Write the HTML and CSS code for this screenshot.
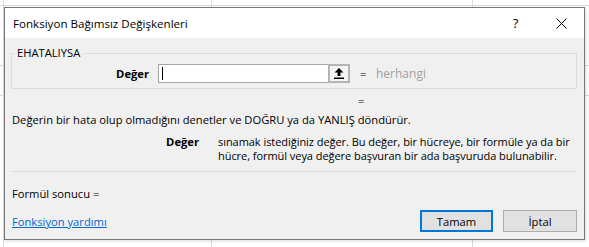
FILE: index.html
```html
<!DOCTYPE html>
<html lang="tr">
<head>
    <meta charset="utf-8">
    <title>Fonksiyon Bağımsız Değişkenleri</title>
    <link rel="stylesheet" href="styles.css">
</head>
<body>
    <div class="dialog">
        <div class="titlebar">
            <span class="title">Fonksiyon Bağımsız Değişkenleri</span>
            <span class="help">?</span>
            <span class="close">
                <svg width="11" height="11" viewBox="0 0 11 11"><path d="M0.5 0.5L10.5 10.5M10.5 0.5L0.5 10.5" stroke="#000" stroke-width="1" fill="none"/></svg>
            </span>
        </div>
        <div class="content">
            <fieldset class="group">
                <legend>EHATALIYSA</legend>
                <div class="argrow">
                    <span class="arglabel">Değer</span>
                    <div class="refbox">
                        <div class="refinput"><span class="caret"></span></div>
                        <span class="refbtn">
                            <svg width="10" height="11" viewBox="0 0 10 11"><path d="M5 0L9.5 4.5H6.5V8H3.5V4.5H0.5Z" fill="#000"/><rect x="0" y="9.5" width="10" height="1.5" fill="#000"/></svg>
                        </span>
                    </div>
                    <span class="eq">=</span>
                    <span class="argvalue">herhangi</span>
                </div>
            </fieldset>
            <div class="resulteq">=</div>
            <p class="desc">Değerin bir hata olup olmadığını denetler ve DOĞRU ya da YANLIŞ döndürür.</p>
            <div class="argdesc">
                <span class="argdesc-name">Değer</span>
                <span class="argdesc-text">sınamak istediğiniz değer. Bu değer, bir hücreye, bir formüle ya da bir hücre, formül veya değere başvuran bir ada başvuruda bulunabilir.</span>
            </div>
            <div class="sep"></div>
            <p class="formula">Formül sonucu =</p>
            <div class="footer">
                <a class="helplink" href="#">Fonksiyon yardımı</a>
                <button class="btn default">Tamam</button>
                <button class="btn">İptal</button>
            </div>
        </div>
    </div>
</body>
</html>
```
FILE: styles.css
```css
* {
    box-sizing: border-box;
}

body {
    margin: 0;
    width: 589px;
    height: 247px;
    overflow: hidden;
    font-family: "Open Sans", "Noto Sans", sans-serif;
    font-size: 11.2px;
    color: #000;
    background-color: #fff;
    background-image:
        linear-gradient(#d9d9d9, #d9d9d9),
        linear-gradient(#d9d9d9, #d9d9d9),
        linear-gradient(#d9d9d9, #d9d9d9),
        linear-gradient(#d9d9d9, #d9d9d9),
        linear-gradient(#d9d9d9, #d9d9d9),
        linear-gradient(#d9d9d9, #d9d9d9);
    background-size: 1px 100%, 1px 100%, 1px 100%, 100% 1px, 100% 1px, 100% 1px;
    background-position: 3px 0, 211px 0, 472px 0, 0 5px, 0 65px, 0 95px;
    background-repeat: no-repeat;
    padding: 7px 0 0 4px;
}

.dialog {
    width: 581px;
    height: 233px;
    border: 1px solid #777;
    background: #f0f0f0;
    box-shadow: 1px 1px 3px rgba(0, 0, 0, 0.15);
    display: flex;
    flex-direction: column;
}

.titlebar {
    height: 30px;
    background: #fff;
    display: flex;
    align-items: center;
    padding-left: 8px;
}

.title {
    flex: 1;
    font-size: 11.6px;
}

.help {
    font-size: 13px;
    width: 45px;
    text-align: center;
}

.close {
    width: 46px;
    display: flex;
    justify-content: center;
    padding-top: 1px;
}

.content {
    padding: 7px 7px 0 6px;
    flex: 1;
}

.group {
    margin: 0;
    border: 1px solid #dcdcdc;
    padding: 3px 0 3px 0;
    height: 44px;
}

.group legend {
    padding: 0 2px;
    margin-left: 3px;
    line-height: 16px;
}

.argrow {
    display: flex;
    align-items: center;
}

.arglabel {
    width: 137px;
    text-align: right;
    font-weight: bold;
    margin-right: 9px;
}

.refbox {
    display: flex;
    width: 192px;
    height: 19px;
}

.refinput {
    width: 170px;
    height: 19px;
    border: 1px solid #a5a5a5;
    border-right: none;
    background: #fff;
    display: flex;
    align-items: center;
    padding-left: 3px;
}

.caret {
    width: 1px;
    height: 13px;
    background: #000;
}

.refbtn {
    width: 22px;
    height: 19px;
    border: 2px solid #b4b4b4;
    background: #f4f4f4;
    display: flex;
    align-items: center;
    justify-content: center;
}

.eq {
    margin-left: 10px;
    width: 16px;
}

.argvalue {
    color: #a0a0a0;
    font-size: 12px;
}

.resulteq {
    margin-left: 347px;
    line-height: 16px;
    height: 16px;
    margin-top: 4px;
}

.desc {
    margin: 3px 0 0 0;
    line-height: 16px;
    padding-left: 1px;
}

.argdesc {
    display: flex;
    margin-top: 7px;
    line-height: 14px;
}

.argdesc-name {
    width: 207px;
    text-align: right;
    font-weight: bold;
    padding-right: 19px;
    flex-shrink: 0;
}

.argdesc-text {
    width: 362px;
    font-size: 11px;
    letter-spacing: -0.05px;
}

.sep {
    height: 1px;
    background: #dadada;
    margin-top: 8px;
}

.formula {
    margin: 14px 0 0 1px;
    line-height: 16px;
}

.footer {
    display: flex;
    align-items: center;
    margin-top: 8px;
}

.helplink {
    color: #0066cc;
    flex: 1;
    padding-left: 1px;
}

.btn {
    width: 74px;
    height: 22px;
    font: inherit;
    background: #e1e1e1;
    border: 1px solid #adadad;
    margin-left: 10px;
    padding: 0;
    color: #000;
}

.btn.default {
    border: 2px solid #0078d7;
    width: 73px;
}
```
